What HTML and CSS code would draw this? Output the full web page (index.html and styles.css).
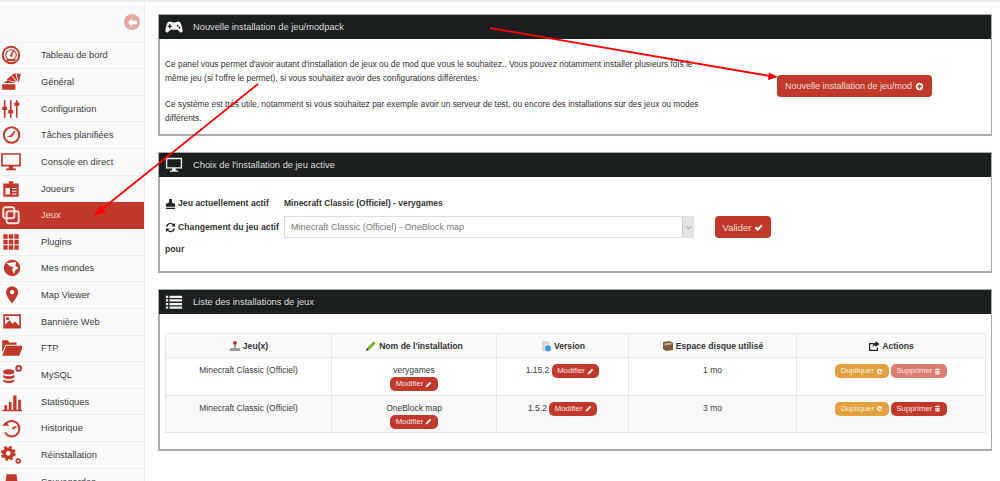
FILE: index.html
```html
<!DOCTYPE html>
<html lang="fr">
<head>
<meta charset="utf-8">
<title>Installations de jeux</title>
<link rel="stylesheet" href="styles.css">
</head>
<body>
<div class="app">
  <nav class="sidebar">
    <div class="side-top">
      <span class="collapse"><svg viewBox="0 0 12 12" class="collapse-ic"><path d="M1 6l4.500-4.500V4H11v4H5.500v2.500z"/></svg></span>
    </div>
    <a class="item"><svg class="ic" viewBox="0 0 20 20"><circle cx="10" cy="10" r="7.500" class="st"/><circle cx="10" cy="10" r="4.800" class="st1"/><path d="M9 11l3-6 1 .5-2.500 6.500z"/><rect x="6" y="13.500" width="8" height="2"/></svg><span>Tableau de bord</span></a>
    <a class="item"><svg class="ic" viewBox="0 0 20 20"><path d="M2 17v-5h12v5zM3 11l4-2.500L14 11zM6 8l4-4 5 6zM10.500 3.500L14 2l2 8zM15 2l4 1-2 8z"/></svg><span>Général</span></a>
    <a class="item"><svg class="ic" viewBox="0 0 20 20"><path d="M3.500 2h1.500v6h1.500v3H5v7H3.500v-7H2V8h1.500zM9 2h1.500v9H12v3h-1.500v4H9v-4H7.500v-3H9zM14.500 2H16v2h1.500v3H16v11h-1.500V7H13V4h1.500z"/></svg><span>Configuration</span></a>
    <a class="item"><svg class="ic" viewBox="0 0 20 20"><circle cx="10.500" cy="10" r="7" class="st"/><path d="M6 11.500l4-1.500 3-4 1 .8-3 5z"/></svg><span>Tâches planifiées</span></a>
    <a class="item"><svg class="ic" viewBox="0 0 20 20"><path d="M1 2h18v12h-7v2h2.500v1.500h-9V16H8v-2H1zm1.500 1.500v9h15v-9z"/></svg><span>Console en direct</span></a>
    <a class="item"><svg class="ic" viewBox="0 0 20 20"><path fill-rule="evenodd" d="M3 5h5V3h4v2h5v12H3zM5 9v6h4V9zm6 0v1h4V9zm0 2.500v1h4v-1zm0 2.500v1h4v-1z"/></svg><span>Joueurs</span></a>
    <a class="item active"><svg class="ic" viewBox="0 0 20 20"><rect x="3" y="3" width="10" height="10" rx="2" class="st"/><rect x="6" y="6.500" width="11" height="11" rx="2" class="st"/></svg><span>Jeux</span></a>
    <a class="item"><svg class="ic" viewBox="0 0 20 20"><path d="M3 3h4v4H3zm5 0h4v4H8zm5 0h4v4h-4zM3 8h4v4H3zm5 0h4v4H8zm5 0h4v4h-4zM3 13h4v4H3zm5 0h4v4H8zm5 0h4v4h-4z"/></svg><span>Plugins</span></a>
    <a class="item"><svg class="ic" viewBox="0 0 20 20"><circle cx="11" cy="10" r="7.500"/><path class="land" d="M6 5.500l3 3 3 .5-1 3 1.500 3.500 1.500-3.500 3-2-3-2 .5-3.500-3 .5z"/></svg><span>Mes mondes</span></a>
    <a class="item"><svg class="ic" viewBox="0 0 20 20"><path fill-rule="evenodd" d="M11 2a5.500 5.500 0 0 1 5.500 5.500C16.500 11 13 14.500 11 18c-2-3.500-5.500-7-5.500-10.500A5.500 5.500 0 0 1 11 2zm0 3.500a2 2 0 1 0 .1 0z"/></svg><span>Map Viewer</span></a>
    <a class="item"><svg class="ic" viewBox="0 0 20 20"><path fill-rule="evenodd" d="M3 3h16v13H3zm1.500 1.500v8l4-4 3 3 2-2 4 4v-9zM7 5.500a1.500 1.500 0 1 1-.1 0z"/></svg><span>Bannière Web</span></a>
    <a class="item"><svg class="ic" viewBox="0 0 20 20"><path d="M2 3h5l1.500 2H15v2H5l-3 7zM5.500 8H21l-3.500 9H2z"/></svg><span>FTP</span></a>
    <a class="item"><svg class="ic" viewBox="0 0 20 20"><path d="M3 6c3-1.500 7-1.500 10 0v2.500c-3 1.500-7 1.500-10 0zM3 10c3 1.500 7 1.500 10 0v2.500c-3 1.500-7 1.500-10 0zM3 14c3 1.500 7 1.500 10 0v2c-3 2-7 2-10 0z"/><circle cx="17" cy="4" r="2.200" class="st"/></svg><span>MySQL</span></a>
    <a class="item"><svg class="ic" viewBox="0 0 20 20"><path d="M2 17h18v1.500H2zM4 13h2.500v4H4zM8 10h2.500v7H8zM12 4h3v13h-3zM16.500 8H19v9h-2.500z"/></svg><span>Statistiques</span></a>
    <a class="item"><svg class="ic" viewBox="0 0 20 20"><path class="st" d="M5 6.500A7 7 0 1 1 4.500 14"/><path d="M2 8h6.500L5 4.500zM11 9.500l4-1.500v1.500l-3.500 2z"/></svg><span>Historique</span></a>
    <a class="item"><svg class="ic" viewBox="0 0 20 20"><circle cx="7.500" cy="8.500" r="3.800" class="gear-ring"/><circle cx="7.500" cy="8.500" r="5.800" class="gear-teeth"/><circle cx="16.500" cy="15.500" r="1.700" class="gear-small"/></svg><span>Réinstallation</span></a>
    <a class="item"><svg class="ic" viewBox="0 0 20 20"><path d="M6 3h9l2 14H4z"/></svg><span>Sauvegardes</span></a>
  </nav>

  <main class="main">
    <section class="panel panel-intro">
      <header class="panel-head">
        <svg class="head-ic" viewBox="0 0 20 16"><path fill-rule="evenodd" d="M5 2c2 0 2.500 1 5 1s3-1 5-1c2.500 0 4 5 4.500 10 .2 2-1.500 3-3 1.500L14 11H6l-2.500 2.500c-1.500 1.500-3.200.5-3-1.500C1 7 2.500 2 5 2zm-.5 3v1.500H3V8h1.500v1.500H6V8h1.500V6.500H6V5zM14 5.500a1 1 0 1 0 .1 0zm2 2a1 1 0 1 0 .1 0z"/></svg>
        <h2>Nouvelle installation de jeu/modpack</h2>
      </header>
      <div class="intro-body">
        <div class="intro-text">
          <p>Ce panel vous permet d'avoir autant d'installation de jeux ou de mod que vous le souhaitez.. Vous pouvez notamment installer plusieurs fois le même jeu (si l'offre le permet), si vous souhaitez avoir des configurations différentes.</p>
          <p>Ce système est très utile, notamment si vous souhaitez par exemple avoir un serveur de test, ou encore des installations sur des jeux ou modes différents.</p>
        </div>
        <a class="btn btn-new">Nouvelle installation de jeu/mod <svg class="btn-ic" viewBox="0 0 12 12"><path fill-rule="evenodd" d="M6 1a5 5 0 1 1-.1 0zM5 3v2H3v2h2v2h2V7h2V5H7V3z"/></svg></a>
      </div>
    </section>

    <section class="panel panel-active">
      <header class="panel-head">
        <svg class="head-ic" viewBox="0 0 20 18"><path d="M1 1h18v12h-7v2h2.500v1.500h-9V15H8v-2H1zm1.500 1.500v9h15v-9z"/></svg>
        <h2>Choix de l'installation de jeu active</h2>
      </header>
      <div class="active-body">
        <div class="label"><svg class="lab-ic" viewBox="0 0 12 12"><path d="M4.500 1h3v3l1 2H11v3.500H1V6h2.500l1-2zM1 10.500h10V12H1z"/></svg>Jeu actuellement actif</div>
        <div class="value">Minecraft Classic (Officiel) - verygames</div>
        <div></div><div></div>
        <div class="label"><svg class="lab-ic" viewBox="0 0 12 12"><path d="M6 1a5 5 0 0 1 3.500 1.400L11 1v4H7l1.500-1.500A3 3 0 0 0 3 5H1a5 5 0 0 1 5-4zM1 7h4L3.500 8.500A3 3 0 0 0 9 7h2a5 5 0 0 1-8.500 2.600L1 11z"/></svg>Changement du jeu actif</div>
        <div class="select"><span>Minecraft Classic (Officiel) - OneBlock map</span><span class="sel-arrow"><svg viewBox="0 0 8 6" class="chev"><path d="M1 1.500l3 3 3-3"/></svg></span></div>
        <div></div>
        <a class="btn btn-valid">Valider <svg class="btn-ic" viewBox="0 0 12 12"><path d="M1 6.500L3 4.500l2 2 4.500-4.500L11.500 4 5 10.500z"/></svg></a>
        <div class="label label-pour">pour</div>
      </div>
    </section>

    <section class="panel panel-list">
      <header class="panel-head">
        <svg class="head-ic" viewBox="0 0 20 16"><path d="M1 1h2.500v2.500H1zm4 0h14v2.500H5zM1 5h2.500v2.500H1zm4 0h14v2.500H5zM1 9h2.500v2.500H1zm4 0h14v2.500H5zM1 13h2.500v2.500H1zm4 0h14v2.500H5z"/></svg>
        <h2>Liste des installations de jeux</h2>
      </header>
      <div class="list-body">
        <table class="tbl">
          <colgroup><col class="c1"><col class="c2"><col class="c3"><col class="c4"><col class="c5"></colgroup>
          <thead>
            <tr>
              <th><svg class="th-ic" viewBox="0 0 12 12"><circle cx="6" cy="3" r="2" fill="#c0392b"/><rect x="5.300" y="4" width="1.400" height="4" fill="#777"/><path d="M1.500 8h9l1 3h-11z" fill="#999"/></svg>Jeu(x)</th>
              <th><svg class="th-ic" viewBox="0 0 12 12"><path d="M2 8l6-6c1-1 3 1 2 2l-6 6z" fill="#6fb52c"/><path d="M2 8l2 2-3 1z" fill="#333"/></svg>Nom de l'installation</th>
              <th><svg class="th-ic" viewBox="0 0 12 12"><path d="M2 1h6l2 2v8H2z" fill="#d5dce2"/><circle cx="8" cy="8.500" r="3" fill="#3d9ae0"/></svg>Version</th>
              <th><svg class="th-ic" viewBox="0 0 12 12"><path d="M1 2l7-1 3 2v7l-7 1-3-2z" fill="#7a5a3a"/><path d="M2.500 3.500l7-1v2l-7 1z" fill="#c9b28a"/></svg>Espace disque utilisé</th>
              <th><svg class="th-ic" viewBox="0 0 12 12"><path fill="#222" d="M1 3h5v1.200H2.200v5.600h6.600V7.500H10V11H1zM7.500 1L11.500 4 7.500 7V5.200C6 5.200 5 6 4.500 7.500 4.500 5 5.500 3.200 7.500 2.800z"/></svg>Actions</th>
            </tr>
          </thead>
          <tbody>
            <tr>
              <td>Minecraft Classic (Officiel)</td>
              <td>verygames<br><a class="pill pill-red pill-block">Modifier <svg class="pill-ic" viewBox="0 0 12 12"><path d="M1 11l.7-3L8.500 1.200l2.300 2.300L4 10.300z"/></svg></a></td>
              <td>1.15.2 <a class="pill pill-red">Modifier <svg class="pill-ic" viewBox="0 0 12 12"><path d="M1 11l.7-3L8.500 1.200l2.300 2.300L4 10.300z"/></svg></a></td>
              <td>1 mo</td>
              <td><a class="pill pill-orange">Dupliquer <svg class="pill-ic" viewBox="0 0 12 12"><path d="M6 1.500a4.500 4.500 0 0 1 3 1.200L10.500 1.500V6H6l1.700-1.700A2.300 2.300 0 1 0 8 8h2.200A4.500 4.500 0 1 1 6 1.500z"/></svg></a> <a class="pill pill-faded">Supprimer <svg class="pill-ic" viewBox="0 0 12 12"><path fill-rule="evenodd" d="M4.500 1h3l.5 1h2.500v1.500h-9V2H4zM2.500 4.500h7V11h-7zM4 6v3.500h1V6zm3 0v3.500h1V6z"/></svg></a></td>
            </tr>
            <tr class="alt">
              <td>Minecraft Classic (Officiel)</td>
              <td>OneBlock map<br><a class="pill pill-red pill-block">Modifier <svg class="pill-ic" viewBox="0 0 12 12"><path d="M1 11l.7-3L8.500 1.200l2.300 2.300L4 10.300z"/></svg></a></td>
              <td>1.5.2 <a class="pill pill-red">Modifier <svg class="pill-ic" viewBox="0 0 12 12"><path d="M1 11l.7-3L8.500 1.200l2.300 2.300L4 10.300z"/></svg></a></td>
              <td>3 mo</td>
              <td><a class="pill pill-orange">Dupliquer <svg class="pill-ic" viewBox="0 0 12 12"><path d="M6 1.500a4.500 4.500 0 0 1 3 1.200L10.500 1.500V6H6l1.700-1.700A2.300 2.300 0 1 0 8 8h2.200A4.500 4.500 0 1 1 6 1.500z"/></svg></a> <a class="pill pill-red">Supprimer <svg class="pill-ic" viewBox="0 0 12 12"><path fill-rule="evenodd" d="M4.500 1h3l.5 1h2.500v1.500h-9V2H4zM2.500 4.500h7V11h-7zM4 6v3.500h1V6zm3 0v3.500h1V6z"/></svg></a></td>
            </tr>
          </tbody>
        </table>
      </div>
    </section>
  </main>
</div>

<svg class="arrows" viewBox="0 0 1000 481">
  <path class="arrow-line" d="M490 28L770 76"/>
  <path class="arrow-head" d="M778 77L769 72.500 768 80z"/>
  <path class="arrow-line" d="M258 84L102 209"/>
  <path class="arrow-head" d="M94 216L100 205 106 212z"/>
</svg>
</body>
</html>
```
FILE: styles.css
```css
* { box-sizing: border-box; }
html, body { margin: 0; height: 481px; overflow: hidden; background: #fff; }
body { font-family: "Liberation Sans", Arial, sans-serif; color: #333; position: relative; border-top: 2px solid #eee; }

.app { display: flex; align-items: flex-start; }

.sidebar { width: 145px; flex: none; height: 479px; overflow: hidden; background: #fafafa; border-right: 1px solid #eee; }
.side-top { height: 40.500px; padding: 12px 4px 0 0; display: flex; justify-content: flex-end; border-bottom: 1px solid #eee; }
.collapse { width: 16px; height: 16px; border-radius: 50%; background: #e3a9a2; display: flex; align-items: center; justify-content: center; }
.collapse-ic { width: 11px; height: 11px; fill: #fff; }

.item { display: flex; align-items: center; height: 26.650px; border-bottom: 1px solid #eee; font-size: 9.300px; color: #3a3a3a; }
.item span { margin-left: 19px; }
.ic { width: 22px; height: 22px; flex: none; fill: #c0392b; }
.st { fill: none; stroke: #c0392b; stroke-width: 1.800; }
.st1 { fill: none; stroke: #c0392b; stroke-width: 1; }
.land { fill: #fafafa; }
.gear-ring { fill: none; stroke: #c0392b; stroke-width: 3.200; }
.gear-teeth { fill: none; stroke: #c0392b; stroke-width: 2; stroke-dasharray: 2.500 2.060; }
.gear-small { fill: none; stroke: #c0392b; stroke-width: 1.600; }
.item.active { background: #c0392b; color: #f3d6d2; border-bottom-color: #c0392b; }
.item.active .st { stroke: #f6e3e0; }

.main { flex: 1; padding: 12px 8px 0 13px; min-width: 0; }
.panel { border: 1px solid #aaa; border-bottom-width: 2px; border-left-width: 2px; margin-bottom: 16px; background: #fff; }
.panel-head { background: #1b1f20; height: 24px; display: flex; align-items: center; color: #ddd; margin-left: -1px; }
.panel-head h2 { font-size: 9.300px; font-weight: 400; margin: 0 0 0 10px; }
.head-ic { width: 18px; height: 18px; margin-left: 6px; fill: #f4f4f4; flex: none; }

.intro-body { display: flex; height: 95px; padding: 18px 0 0 5px; font-size: 8.400px; line-height: 14.300px; color: #333; }
.intro-text { width: 540px; flex: none; }
.intro-text p { margin: 0 0 11px; }

.btn { background: #c0392b; color: #f6dcd8; border-radius: 4px; display: inline-flex; align-items: center; justify-content: center; font-size: 9px; }
.btn-new { width: 155px; height: 22px; margin: 18px 0 0 72px; }
.btn-ic { width: 9px; height: 9px; fill: #fff; margin-left: 3px; }

.active-body { display: grid; grid-template-columns: 119px 410px 21px 56px; grid-auto-rows: min-content; row-gap: 2px; height: 94px; padding: 15px 0 0 5px; font-size: 8.700px; align-items: center; }
.label { font-weight: 700; color: #333; display: flex; align-items: center; height: 22px; }
.value { font-weight: 700; font-size: 8.500px; color: #333; }
.lab-ic { width: 11px; height: 11px; margin-right: 2px; fill: #222; flex: none; }
.select { height: 22px; border: 1px solid #ddd; font-size: 9.100px; color: #777; display: flex; align-items: center; justify-content: space-between; padding-left: 6px; background: #fff; }
.sel-arrow { width: 11px; height: 20px; background: #e4e4e4; border-left: 1px solid #ccc; display: flex; align-items: center; justify-content: center; }
.chev { width: 7px; height: 5px; fill: none; stroke: #777; stroke-width: 1; }
.btn-valid { height: 22px; font-size: 9.500px; }
.label-pour { margin-top: -2px; }

.list-body { padding: 19px 5px 0 5px; height: 135px; }
.tbl { width: 820px; table-layout: fixed; border-collapse: collapse; font-size: 8.500px; color: #3a3a3a; }
.c1 { width: 166px; } .c2 { width: 165px; } .c3 { width: 132px; } .c4 { width: 168px; } .c5 { width: 189px; }
.tbl th, .tbl td { border: 1px solid #e8e8e8; text-align: center; vertical-align: top; }
.tbl th { height: 24px; font-size: 8.600px; font-weight: 700; background: #fafafa; vertical-align: middle; color: #333; }
.tbl td { padding: 6px 2px 0; height: 37.500px; line-height: 12px; }
.alt td { background: #f9f9f9; }
.th-ic { width: 12px; height: 12px; margin-right: 2px; vertical-align: -3px; }

.pill { display: inline-flex; align-items: center; height: 14px; padding: 0 5.500px; border-radius: 5px; font-size: 7.800px; color: #fbe4e1; vertical-align: middle; line-height: 14px; }
.pill-block { margin-top: 1px; }
.pill-red { background: #c0392b; }
.pill-orange { background: #e2a03f; color: #fdf0dc; }
.pill-faded { background: #de7c74; color: #fbe4e1; }
.pill-ic { width: 7px; height: 7px; fill: #fff; margin-left: 2px; }

.arrows { position: absolute; left: 0; top: -2px; width: 1000px; height: 481px; pointer-events: none; }
.arrow-line { stroke: #f00; stroke-width: 1.800; fill: none; }
.arrow-head { fill: #f00; }
```
